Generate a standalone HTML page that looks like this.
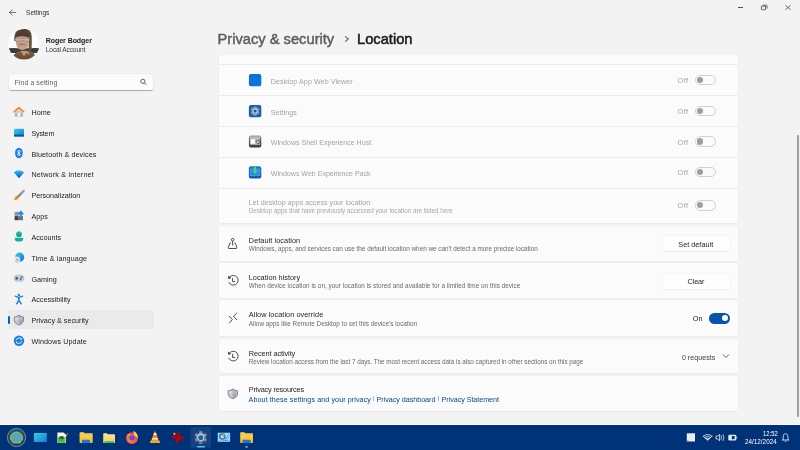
<!DOCTYPE html>
<html><head><meta charset="utf-8"><style>
html,body{margin:0;padding:0;width:800px;height:450px;overflow:hidden;background:#f3f3f3;}
body{position:relative;font-family:"Liberation Sans",sans-serif;}
.a{position:absolute;}
.t{position:absolute;white-space:nowrap;line-height:1;}
.card{position:absolute;left:219px;width:519px;background:#fbfbfb;border-radius:1.8px;box-shadow:0 0 0 0.5px #ececec, 0 0.6px 0 0 #e6e6e6;}
.btn{position:absolute;background:#fefefe;border-radius:2.5px;box-shadow:0 0 0 0.5px #efefef, 0 0.7px 0 0 #e0e0e0;}
.sep{color:#8a8a8a;padding:0 2px;font-size:6px;position:relative;top:-1px}
</style></head><body>
<div id="root" style="position:absolute;left:0;top:0;width:800px;height:450px;will-change:transform">
<svg class="a" style="left:7px;top:7px" width="11" height="11" viewBox="7 7 11 11"><path d="M15.8 12.45H9.6M12.2 9.8L9.5 12.45L12.2 15.1" fill="none" stroke="#4e4e4e" stroke-width="0.8" stroke-linecap="round" stroke-linejoin="round"/></svg>
<div class="t" style="left:26.10px;top:10.00px;font-size:6.6px;color:#303030;font-weight:400;letter-spacing:-0.091px;">Settings</div>
<div class="a" style="left:738px;top:7px;width:5.2px;height:0.8px;background:#505050"></div>
<svg class="a" style="left:760px;top:4px" width="9" height="7" viewBox="0 0 9 7"><rect x="1.4" y="2.2" width="4.2" height="3.6" rx="0.5" fill="none" stroke="#4a4a4a" stroke-width="0.85"/><path d="M2.6 1.2H6.4Q7 1.2 7 1.8V4.6" fill="none" stroke="#4a4a4a" stroke-width="0.85"/></svg>
<svg class="a" style="left:784px;top:4px" width="8" height="7" viewBox="0 0 8 7"><path d="M1.4 1.3l5.2 4.5M6.6 1.3L1.4 5.8" stroke="#4a4a4a" stroke-width="0.8"/></svg>
<svg class="a" style="left:8px;top:28px" width="32" height="32" viewBox="0 0 32 32">
<defs><clipPath id="av"><circle cx="16" cy="16" r="15.6"/></clipPath>
<linearGradient id="avj" x1="0" y1="0" x2="0" y2="1"><stop offset="0" stop-color="#8a6248"/><stop offset="1" stop-color="#5a3a28"/></linearGradient>
<linearGradient id="avh" x1="0" y1="0" x2="1" y2="0"><stop offset="0" stop-color="#62503e"/><stop offset="0.5" stop-color="#4a3a2e"/><stop offset="1" stop-color="#6a5846"/></linearGradient></defs>
<circle cx="16" cy="16" r="15.6" fill="#fcfcfc"/>
<g clip-path="url(#av)">
<path d="M-1 20.5 Q5 19.6 9 20.2 L23 20.2 Q27 19.6 33 20.5 L33 25 L-1 25Z" fill="#3a3c36"/>
<path d="M3 34 Q4 27 9 24 Q14 22.4 17 22.6 Q23 22.8 26 25.4 Q28.5 28 29 34Z" fill="url(#avj)"/>
<path d="M13 23 L16 28.5 L19 23.2Z" fill="#c09a84"/>
<path d="M17.5 23.4 L21.5 27 L20 23.4Z" fill="#d4bca4"/>
<path d="M6.2 13 Q5.8 5 9.5 2.6 Q13.5 0.6 17.5 1 Q22 1.4 23.2 5 Q24.2 9 23.8 14 Q24 20 22.8 24.5 L20.8 24.5 Q20.8 18 20.6 12Z" fill="url(#avh)"/>
<path d="M7.4 9.5 Q7.6 14 8.4 17.6 Q9.8 21.6 13.8 22 Q18 22 20.4 18.6 L21.4 10 Q15.6 6.8 7.4 9.5Z" fill="#c79e8c"/>
<path d="M6.6 10 Q12 6 21.8 8.6 L22 5.6 Q16.5 3 9.2 4.6Z" fill="#4e3e30"/>
<path d="M7.2 10.4 H21.2 V12.9 Q18 13.9 14.4 12.5 Q10.4 13.9 7.2 12.8Z" fill="#cbb0a0" stroke="#8e7868" stroke-width="0.45"/>
<path d="M11 16.6 Q14 15.8 17 16.6" stroke="#7e6050" stroke-width="0.85" fill="none"/>
</g></svg>
<div class="t" style="left:45.80px;top:37.00px;font-size:7.0px;color:#1b1b1b;font-weight:700;letter-spacing:-0.056px;">Roger Bodger</div>
<div class="t" style="left:45.80px;top:47.00px;font-size:6.6px;color:#3a3a3a;font-weight:400;letter-spacing:-0.128px;">Local Account</div>
<div class="a" style="left:9px;top:74px;width:144px;height:16.6px;background:#fbfbfb;border-radius:2px;box-shadow:0 0 0 0.5px #e6e6e6;border-bottom:0.7px solid #b0b0b0;box-sizing:border-box"></div>
<div class="t" style="left:14.50px;top:80.00px;font-size:7.1px;color:#666666;font-weight:400;letter-spacing:0.022px;">Find a setting</div>
<svg class="a" style="left:138px;top:77px" width="10" height="10" viewBox="138 77 10 10"><circle cx="142.9" cy="81.3" r="2.1" fill="none" stroke="#4a4a4a" stroke-width="0.85"/><path d="M144.5 82.9L146 84.4" stroke="#4a4a4a" stroke-width="0.9" stroke-linecap="round"/></svg>
<div class="a" style="left:8px;top:310.4px;width:146px;height:18.8px;background:#eaeaea;border-radius:3px"></div>
<div class="a" style="left:8.3px;top:316px;width:1.6px;height:8px;background:#005fb8;border-radius:1px"></div>
<div class="t" style="left:31.40px;top:109.00px;font-size:7.2px;color:#1b1b1b;font-weight:400;letter-spacing:0.078px;">Home</div>
<div class="t" style="left:31.40px;top:130.00px;font-size:7.2px;color:#1b1b1b;font-weight:400;letter-spacing:-0.195px;">System</div>
<div class="t" style="left:31.40px;top:151.00px;font-size:7.2px;color:#1b1b1b;font-weight:400;letter-spacing:0.077px;">Bluetooth &amp; devices</div>
<div class="t" style="left:31.40px;top:171.00px;font-size:7.2px;color:#1b1b1b;font-weight:400;letter-spacing:0.193px;">Network &amp; internet</div>
<div class="t" style="left:31.40px;top:192.00px;font-size:7.2px;color:#1b1b1b;font-weight:400;letter-spacing:-0.024px;">Personalization</div>
<div class="t" style="left:31.40px;top:213.00px;font-size:7.2px;color:#1b1b1b;font-weight:400;letter-spacing:0.002px;">Apps</div>
<div class="t" style="left:31.40px;top:234.00px;font-size:7.2px;color:#1b1b1b;font-weight:400;letter-spacing:0.028px;">Accounts</div>
<div class="t" style="left:31.40px;top:255.00px;font-size:7.2px;color:#1b1b1b;font-weight:400;letter-spacing:0.115px;">Time &amp; language</div>
<div class="t" style="left:31.40px;top:276.00px;font-size:7.2px;color:#1b1b1b;font-weight:400;letter-spacing:0.021px;">Gaming</div>
<div class="t" style="left:31.40px;top:296.00px;font-size:7.2px;color:#1b1b1b;font-weight:400;letter-spacing:0.011px;">Accessibility</div>
<div class="t" style="left:31.40px;top:317.00px;font-size:7.2px;color:#1b1b1b;font-weight:400;letter-spacing:0.010px;">Privacy &amp; security</div>
<div class="t" style="left:31.40px;top:338.00px;font-size:7.2px;color:#1b1b1b;font-weight:400;letter-spacing:0.083px;">Windows Update</div>
<svg class="a" style="left:0;top:100px" width="40" height="260" viewBox="0 100 40 260">
<defs>
<linearGradient id="gsys" x1="0" y1="0" x2="1" y2="1"><stop offset="0" stop-color="#36d0e6"/><stop offset="1" stop-color="#1478d4"/></linearGradient>
<linearGradient id="gwifi" x1="0" y1="0" x2="0" y2="1"><stop offset="0" stop-color="#3ac6f0"/><stop offset="0.5" stop-color="#1a86dc"/><stop offset="1" stop-color="#0a4fa8"/></linearGradient>
<linearGradient id="gwall" x1="0" y1="0" x2="0" y2="1"><stop offset="0" stop-color="#e4e4e4"/><stop offset="1" stop-color="#a8a8a8"/></linearGradient>
<linearGradient id="gacc" x1="0" y1="0" x2="0" y2="1"><stop offset="0" stop-color="#28c8b0"/><stop offset="1" stop-color="#109a88"/></linearGradient>
<linearGradient id="gtime" x1="0" y1="0" x2="1" y2="1"><stop offset="0" stop-color="#3ad0e8"/><stop offset="1" stop-color="#1070d0"/></linearGradient>
<linearGradient id="gshield" x1="0" y1="0" x2="1" y2="1"><stop offset="0" stop-color="#d8dde4"/><stop offset="1" stop-color="#8c929a"/></linearGradient>
<linearGradient id="gbrush" x1="0" y1="0" x2="1" y2="0"><stop offset="0" stop-color="#6e7680"/><stop offset="1" stop-color="#9aa2aa"/></linearGradient>
<linearGradient id="gclock" x1="0" y1="0" x2="1" y2="1"><stop offset="0" stop-color="#fafafa"/><stop offset="1" stop-color="#b8bcc2"/></linearGradient>
</defs>
<!-- home -->
<path d="M14.8 111.8V116.4H23V111.8L18.9 108.6Z" fill="url(#gwall)"/>
<rect x="17.4" y="112.6" width="3" height="3.8" fill="#f3f3f3"/>
<path d="M14 111.8L18.9 107.6L23.8 111.8" fill="none" stroke="#f07b1e" stroke-width="1.4" stroke-linejoin="round" stroke-linecap="round"/>
<!-- system -->
<rect x="14" y="128.8" width="10" height="7.6" rx="0.8" fill="url(#gsys)"/>
<rect x="14" y="134.6" width="10" height="1.8" rx="0.5" fill="#0e5a98"/>
<!-- bluetooth -->
<ellipse cx="18.9" cy="153" rx="3.9" ry="5.2" fill="#1a80ea"/>
<path d="M17.2 151.2L20.4 154.6L18.9 156V150L20.4 151.4L17.2 154.8" fill="none" stroke="#fff" stroke-width="0.75" stroke-linejoin="round"/>
<!-- network -->
<path d="M13.8 172.2Q19 168.4 24.2 172.2L19 178.2Z" fill="url(#gwifi)"/>
<!-- personalization -->
<path d="M23.8 190.8L17.6 197.2" stroke="url(#gbrush)" stroke-width="2.2" stroke-linecap="round"/>
<path d="M17.8 195.8Q19.6 197.6 17.8 199.2Q16 200.2 13.8 199.8Q15 198.6 15 197.4Q15.6 195.4 17.8 195.8Z" fill="#f58a1a"/>
<!-- apps -->
<rect x="14.6" y="211.8" width="4.1" height="4.1" fill="#8f959c"/>
<rect x="14.6" y="216.1" width="4.1" height="4.1" fill="#3c4046"/>
<rect x="18.9" y="216.1" width="4.1" height="4.1" fill="#6c7178"/>
<path d="M20.8 210.6L23.8 213.6L20.8 216.6L17.8 213.6Z" fill="#1a8cec"/>
<!-- accounts -->
<circle cx="19" cy="234.2" r="2.9" fill="url(#gacc)"/>
<path d="M14.8 237.8H23.2V239Q23.2 241.6 19 241.6Q14.8 241.6 14.8 239Z" fill="#18b09a"/>
<!-- time -->
<circle cx="19.6" cy="257.2" r="4.6" fill="url(#gtime)"/>
<circle cx="16.9" cy="260" r="3.2" fill="url(#gclock)" stroke="#f3f3f3" stroke-width="0.5"/>
<path d="M16.9 258.4V260.2H18.2" stroke="#6a7078" stroke-width="0.5" fill="none"/>
<!-- gaming -->
<rect x="14.1" y="274.9" width="9.8" height="6.6" rx="3.3" fill="#c6ccd4" stroke="#a4acb6" stroke-width="0.4"/>
<rect x="15.6" y="277" width="2.2" height="2.4" rx="0.5" fill="#4a4e56"/>
<circle cx="21.7" cy="277.3" r="1" fill="#2a7ed8"/>
<circle cx="20.6" cy="279.3" r="1" fill="#2a7ed8"/>
<!-- accessibility -->
<circle cx="18.9" cy="295" r="1.2" fill="#1a7ee0"/>
<path d="M15.2 296.2L18.9 297.6L22.6 296.2" fill="none" stroke="#1a7ee0" stroke-width="1.4" stroke-linecap="round" stroke-linejoin="round"/>
<path d="M18.9 297.4V300.4M18.9 300.4L16.6 303.8M18.9 300.4L21.2 303.8" fill="none" stroke="#1a7ee0" stroke-width="1.5" stroke-linecap="round" stroke-linejoin="round"/>
<!-- shield -->
<path d="M18.9 314.8Q21.5 316.6 24 316.7V320Q23.6 323.8 18.9 325.4Q14.2 323.8 13.8 320V316.7Q16.3 316.6 18.9 314.8Z" fill="#7e848c"/>
<path d="M18.9 315.9Q16.8 317.3 14.7 317.5V320Q15.1 323.1 18.9 324.4Z" fill="#d2d6dc"/>
<path d="M18.9 315.9Q21 317.3 23.1 317.5V320Q22.7 323.1 18.9 324.4Z" fill="#b4bac2"/>
<path d="M14.8 320.2H18.9V324.3Q15.4 322.9 14.8 320.2Z" fill="#c2c6cc"/>
<path d="M23 320.2H18.9V324.3Q22.4 322.9 23 320.2Z" fill="#a2a8b0"/>
<!-- update -->
<circle cx="19" cy="340.7" r="5.2" fill="#1a80e2"/>
<path d="M16.4 340.2A2.7 2.7 0 0 1 21.3 339" fill="none" stroke="#fff" stroke-width="0.8"/>
<path d="M21.6 341.2A2.7 2.7 0 0 1 16.7 342.4" fill="none" stroke="#fff" stroke-width="0.8"/>
<path d="M21.9 337.8V339.6H20.1Z" fill="#fff"/>
<path d="M16.1 343.6V341.8H17.9Z" fill="#fff"/>
</svg>

<div class="t" style="left:217.50px;top:32.00px;font-size:14.7px;color:#5c5c5c;font-weight:400;-webkit-text-stroke:0.45px #5c5c5c">Privacy &amp; security</div>
<svg class="a" style="left:343px;top:34px" width="8" height="10" viewBox="343 34 8 10"><path d="M345.4 36.7L348.3 39L345.4 41.3" fill="none" stroke="#5c5c5c" stroke-width="1.05" stroke-linecap="round" stroke-linejoin="round"/></svg>
<div class="t" style="left:357.00px;top:32.00px;font-size:14.7px;color:#1b1b1b;font-weight:400;-webkit-text-stroke:0.55px #1b1b1b">Location</div>
<div class="card" style="top:55px;height:168px;border-top-left-radius:0;border-top-right-radius:0"></div>
<div class="a" style="left:217px;top:53px;width:523px;height:2px;background:#f3f3f3"></div>
<div class="a" style="left:219px;top:64.1px;width:519px;height:1px;background:#ececec"></div>
<div class="a" style="left:219px;top:94.9px;width:519px;height:1px;background:#ececec"></div>
<div class="a" style="left:219px;top:125.9px;width:519px;height:1px;background:#ececec"></div>
<div class="a" style="left:219px;top:156.9px;width:519px;height:1px;background:#ececec"></div>
<div class="a" style="left:219px;top:187.9px;width:519px;height:1px;background:#ececec"></div>
<div class="t" style="left:270.80px;top:79.00px;font-size:7.1px;color:#a3a3a3;font-weight:400;letter-spacing:0.082px;">Desktop App Web Viewer</div>
<div class="t" style="left:270.80px;top:110.00px;font-size:7.1px;color:#a3a3a3;font-weight:400;letter-spacing:0.045px;">Settings</div>
<div class="t" style="left:270.80px;top:140.00px;font-size:7.1px;color:#a3a3a3;font-weight:400;letter-spacing:-0.005px;">Windows Shell Experience Host</div>
<div class="t" style="left:270.80px;top:171.00px;font-size:7.1px;color:#a3a3a3;font-weight:400;letter-spacing:-0.023px;">Windows Web Experience Pack</div>
<div class="t" style="left:677.60px;top:77.00px;font-size:7.3px;color:#a3a3a3;font-weight:400;letter-spacing:0.364px;">Off</div>
<div class="a" style="left:694.5px;top:74.8px;width:21px;height:10.4px;border:0.7px solid #cfcfcf;border-radius:6px;box-sizing:border-box"></div>
<div class="a" style="left:696.5px;top:76.8px;width:6.2px;height:6.2px;background:#9e9e9e;border-radius:50%"></div>
<div class="t" style="left:677.60px;top:108.00px;font-size:7.3px;color:#a3a3a3;font-weight:400;letter-spacing:0.364px;">Off</div>
<div class="a" style="left:694.5px;top:105.8px;width:21px;height:10.4px;border:0.7px solid #cfcfcf;border-radius:6px;box-sizing:border-box"></div>
<div class="a" style="left:696.5px;top:107.8px;width:6.2px;height:6.2px;background:#9e9e9e;border-radius:50%"></div>
<div class="t" style="left:677.60px;top:139.00px;font-size:7.3px;color:#a3a3a3;font-weight:400;letter-spacing:0.364px;">Off</div>
<div class="a" style="left:694.5px;top:136.4px;width:21px;height:10.4px;border:0.7px solid #cfcfcf;border-radius:6px;box-sizing:border-box"></div>
<div class="a" style="left:696.5px;top:138.4px;width:6.2px;height:6.2px;background:#9e9e9e;border-radius:50%"></div>
<div class="t" style="left:677.60px;top:169.00px;font-size:7.3px;color:#a3a3a3;font-weight:400;letter-spacing:0.364px;">Off</div>
<div class="a" style="left:694.5px;top:167.1px;width:21px;height:10.4px;border:0.7px solid #cfcfcf;border-radius:6px;box-sizing:border-box"></div>
<div class="a" style="left:696.5px;top:169.1px;width:6.2px;height:6.2px;background:#9e9e9e;border-radius:50%"></div>
<div class="t" style="left:677.60px;top:202.00px;font-size:7.3px;color:#a3a3a3;font-weight:400;letter-spacing:0.364px;">Off</div>
<div class="a" style="left:694.5px;top:200.3px;width:21px;height:10.4px;border:0.7px solid #cfcfcf;border-radius:6px;box-sizing:border-box"></div>
<div class="a" style="left:696.5px;top:202.3px;width:6.2px;height:6.2px;background:#9e9e9e;border-radius:50%"></div>
<div class="t" style="left:248.80px;top:200.00px;font-size:7.1px;color:#a3a3a3;font-weight:400;letter-spacing:0.030px;">Let desktop apps access your location</div>
<div class="t" style="left:248.80px;top:208.00px;font-size:6.33px;color:#a8a8a8;font-weight:400;letter-spacing:-0.009px;">Desktop apps that have previously accessed your location are listed here</div>
<div class="card" style="top:226px;height:34.5px;"></div>
<div class="t" style="left:248.80px;top:237.00px;font-size:7.3px;color:#262626;font-weight:400;letter-spacing:0.068px;">Default location</div>
<div class="t" style="left:248.80px;top:246.00px;font-size:6.33px;color:#6a6a6a;font-weight:400;letter-spacing:0.004px;">Windows, apps, and services can use the default location when we can't detect a more precise location</div>
<div class="btn" style="left:662.7px;top:235.9px;width:67px;height:15.2px"></div>
<div class="t" style="left:678.30px;top:241.00px;font-size:7.2px;color:#1b1b1b;font-weight:400;letter-spacing:0.048px;">Set default</div>
<div class="card" style="top:263px;height:35px;"></div>
<div class="t" style="left:248.80px;top:274.00px;font-size:7.3px;color:#262626;font-weight:400;letter-spacing:0.018px;">Location history</div>
<div class="t" style="left:248.80px;top:283.00px;font-size:6.33px;color:#6a6a6a;font-weight:400;letter-spacing:0.034px;">When device location is on, your location is stored and available for a limited time on this device</div>
<div class="btn" style="left:662.7px;top:273.5px;width:67px;height:15.2px"></div>
<div class="t" style="left:687.60px;top:278.00px;font-size:7.2px;color:#1b1b1b;font-weight:400;letter-spacing:-0.117px;">Clear</div>
<div class="card" style="top:300px;height:35.6px;"></div>
<div class="t" style="left:248.80px;top:311.00px;font-size:7.3px;color:#262626;font-weight:400;letter-spacing:0.065px;">Allow location override</div>
<div class="t" style="left:248.80px;top:321.00px;font-size:6.33px;color:#6a6a6a;font-weight:400;letter-spacing:0.012px;">Allow apps like Remote Desktop to set this device's location</div>
<div class="t" style="left:692.80px;top:315.00px;font-size:7.2px;color:#1b1b1b;font-weight:400;letter-spacing:0.003px;">On</div>
<div class="a" style="left:709px;top:313.2px;width:21.2px;height:10.4px;background:#0853ab;border-radius:6px"></div>
<div class="a" style="left:721.6px;top:315.3px;width:6.2px;height:6.2px;background:#fff;border-radius:50%"></div>
<div class="card" style="top:339px;height:34px;"></div>
<div class="t" style="left:248.80px;top:350.00px;font-size:7.3px;color:#262626;font-weight:400;letter-spacing:-0.070px;">Recent activity</div>
<div class="t" style="left:248.80px;top:359.00px;font-size:6.33px;color:#6a6a6a;font-weight:400;letter-spacing:-0.026px;">Review location access from the last 7 days. The most recent access data is also captured in other sections on this page</div>
<div class="t" style="left:681.90px;top:355.00px;font-size:7.1px;color:#404040;font-weight:400;letter-spacing:0.027px;">0 requests</div>
<svg class="a" style="left:722px;top:353px" width="8" height="6" viewBox="0 0 8 6"><path d="M1 1.5L4 4.5L7 1.5" fill="none" stroke="#505050" stroke-width="0.9"/></svg>
<div class="card" style="top:376px;height:34.7px;"></div>
<div class="t" style="left:248.80px;top:386.00px;font-size:7.3px;color:#262626;font-weight:400;letter-spacing:-0.171px;">Privacy resources</div>
<div class="t" style="left:248.60px;top:396.00px;font-size:7.2px;color:#0c4696;font-weight:400;letter-spacing:0.068px;">About these settings and your privacy</div>
<div class="t" style="left:376.50px;top:396.00px;font-size:7.2px;color:#0c4696;font-weight:400;letter-spacing:-0.037px;">Privacy dashboard</div>
<div class="t" style="left:441.60px;top:396.00px;font-size:7.2px;color:#0c4696;font-weight:400;letter-spacing:-0.060px;">Privacy Statement</div>
<div class="a" style="left:373px;top:396px;width:0.7px;height:5.2px;background:#b4b4b4"></div><div class="a" style="left:438.3px;top:396px;width:0.7px;height:5.2px;background:#b4b4b4"></div>
<svg class="a" style="left:220px;top:50px" width="50" height="360" viewBox="220 50 50 360">
<defs>
<linearGradient id="gshell" x1="0" y1="0" x2="0" y2="1"><stop offset="0" stop-color="#9a9a9a"/><stop offset="0.5" stop-color="#5a5a5a"/><stop offset="1" stop-color="#3a3a3a"/></linearGradient>
<linearGradient id="gweb" x1="0" y1="0" x2="0" y2="1"><stop offset="0" stop-color="#1a7ad8"/><stop offset="1" stop-color="#0a58b0"/></linearGradient>
<linearGradient id="gshield2" x1="0" y1="0" x2="1" y2="1"><stop offset="0" stop-color="#d4d9e0"/><stop offset="1" stop-color="#868c94"/></linearGradient>
</defs>
<!-- descender remnants -->
<g fill="#c0c0c0"><rect x="293.2" y="54.2" width="0.6" height="1.6"/><rect x="297.2" y="54.2" width="0.6" height="1.6"/><path d="M336.2 55.8L337.6 54.2" stroke="#c0c0c0" stroke-width="0.5"/><rect x="351.2" y="54.2" width="0.6" height="1.6"/></g>
<!-- desktop app web viewer -->
<rect x="248.9" y="73.9" width="12.4" height="12.4" rx="2" fill="#0a74d8"/>
<!-- settings -->
<rect x="248.9" y="104.9" width="12.4" height="12.4" rx="2" fill="#0b62bc"/>
<g transform="translate(255.1 111.1)">
<path d="M-1.3 -4.6H1.3L1.8 -3.3L3.2 -3.6L4.5 -1.4L3.6 -0.3V0.3L4.5 1.4L3.2 3.6L1.8 3.3L1.3 4.6H-1.3L-1.8 3.3L-3.2 3.6L-4.5 1.4L-3.6 0.3V-0.3L-4.5 -1.4L-3.2 -3.6L-1.8 -3.3Z" fill="#8e949c"/>
<circle r="2.5" fill="#dde2e8"/><circle r="1.7" fill="#0b5cb4"/>
</g>
<!-- shell experience host -->
<rect x="248.9" y="135.6" width="12.4" height="12" rx="2" fill="url(#gshell)"/>
<rect x="249.8" y="136.4" width="10.6" height="1.6" fill="#b8b8b8"/>
<rect x="250.2" y="138.4" width="9.8" height="6.2" fill="#e0e0e0"/>
<rect x="250.8" y="139.4" width="4" height="4.2" fill="#fafafa"/>
<path d="M256.2 139.4V143.4M257.2 141L259.2 139.6V143.4H257.2" stroke="#303030" stroke-width="0.8" fill="none"/>
<!-- web experience pack -->
<rect x="248.9" y="166.2" width="12.4" height="12.4" rx="2" fill="url(#gweb)"/>
<rect x="250.4" y="169" width="9.4" height="6.8" fill="#2a8ae8" stroke="#6ab0f0" stroke-width="0.5"/>
<path d="M255.1 167.6V171.8" stroke="#50d850" stroke-width="2.2" stroke-linecap="round"/>
<path d="M252.3 170.8L255.1 174L257.9 170.8Z" fill="#50d850"/>
<!-- default location -->
<g fill="none" stroke="#303030" stroke-width="0.85" stroke-linejoin="round">
<circle cx="232.6" cy="239.7" r="1.3"/>
<path d="M232.6 241V245.6"/>
<path d="M230.9 243.1H229.9L228.3 247.6Q228.1 248.5 229 248.5H236.2Q237.1 248.5 236.9 247.6L235.3 243.1H234.3"/>
</g>
<!-- location history -->
<g fill="none" stroke="#303030" stroke-width="0.85" stroke-linecap="round" stroke-linejoin="round">
<path d="M228.8 282.4A4.9 4.9 0 1 0 229.8 276.8"/>
<path d="M232.6 278.4V281.6H234.8"/>
</g>
<path d="M228.1 275.6L231.2 278.3L228.3 278.9Z" fill="#303030"/>
<!-- override -->
<g fill="none" stroke="#303030" stroke-width="0.85" stroke-linecap="round" stroke-linejoin="round">
<path d="M229.2 316.4L232.4 319.4L229.4 323"/>
<path d="M236.6 313.2L233.4 316.4L236.6 319.6"/>
</g>
<!-- recent activity -->
<g fill="none" stroke="#303030" stroke-width="0.85" stroke-linecap="round" stroke-linejoin="round">
<path d="M228.8 358.2A4.9 4.9 0 1 0 229.8 352.6"/>
<path d="M232.6 354.2V357.4H234.8"/>
</g>
<path d="M228.1 351.4L231.2 354.1L228.3 354.7Z" fill="#303030"/>
<!-- privacy shield -->
<path d="M232.8 388.6Q235.4 390.4 238 390.5V393.8Q237.6 397.6 232.8 399.3Q228 397.6 227.6 393.8V390.5Q230.2 390.4 232.8 388.6Z" fill="#7e848c"/>
<path d="M232.8 389.7Q230.6 391.1 228.5 391.3V393.8Q228.9 396.9 232.8 398.3Z" fill="#d2d6dc"/>
<path d="M232.8 389.7Q235 391.1 237.1 391.3V393.8Q236.7 396.9 232.8 398.3Z" fill="#b4bac2"/>
<path d="M228.6 394H232.8V398.2Q229.2 396.8 228.6 394Z" fill="#c2c6cc"/>
<path d="M237 394H232.8V398.2Q236.4 396.8 237 394Z" fill="#a2a8b0"/>
</svg>

<div class="a" style="left:797px;top:135px;width:2px;height:282px;background:#a0a0a0;border-radius:1px"></div>
<div class="a" style="left:0;top:424px;width:800px;height:1px;background:#fbfbfb"></div>
<div class="a" style="left:0;top:425px;width:800px;height:25px;background:#003278"></div>
<svg class="a" style="left:0;top:425px" width="800" height="25" viewBox="0 425 800 25">
<defs>
<radialGradient id="gshellbg" cx="0.5" cy="0.45" r="0.55"><stop offset="0" stop-color="#3e8090"/><stop offset="1" stop-color="#163a4c"/></radialGradient>
<linearGradient id="gdesk" x1="0" y1="0" x2="1" y2="1"><stop offset="0" stop-color="#34cce8"/><stop offset="1" stop-color="#1480d8"/></linearGradient>
<linearGradient id="gfold" x1="0" y1="0" x2="0" y2="1"><stop offset="0" stop-color="#ffd860"/><stop offset="1" stop-color="#f4b820"/></linearGradient>
<linearGradient id="gfold2" x1="0" y1="0" x2="0" y2="1"><stop offset="0" stop-color="#ffe49a"/><stop offset="1" stop-color="#f8cc58"/></linearGradient>
<radialGradient id="gff" cx="0.4" cy="0.6" r="0.6"><stop offset="0" stop-color="#ff9a20"/><stop offset="1" stop-color="#ff3a4a"/></radialGradient>
<linearGradient id="ggear" x1="0" y1="0" x2="0" y2="1"><stop offset="0" stop-color="#9aa0a8"/><stop offset="1" stop-color="#70767e"/></linearGradient>
</defs>
<!-- start shell -->
<circle cx="16.5" cy="437.5" r="9.1" fill="url(#gshellbg)" stroke="#9ab4c4" stroke-width="0.7"/>
<path d="M12.8 442.8L12.4 441.4L11 440.2Q10.2 438.4 10.8 436.4Q10.6 435 11.8 434.4Q12.2 433.2 13.4 433.2Q14.2 432.1 15.4 432.4Q16.5 431.6 17.6 432.4Q18.8 432.1 19.6 433.2Q20.8 433.2 21.2 434.4Q22.4 435 22.2 436.4Q22.8 438.4 22 440.2L20.6 441.4L20.2 442.8Z" fill="#52a8b8" stroke="#e6c040" stroke-width="0.8" stroke-linejoin="round"/>
<!-- desktop blue -->
<rect x="34" y="433" width="12.8" height="9" fill="url(#gdesk)"/>
<!-- notepad-ish -->
<path d="M57.4 432.4H63.6L66 434.8V443H57.4Z" fill="#f4f4f0"/>
<rect x="58" y="437.4" width="7.4" height="5.4" fill="#4ab830"/>
<ellipse cx="61.6" cy="437.6" rx="2.6" ry="1.6" fill="#2a6a2a"/>
<path d="M64 441L67.6 433" stroke="#d8a838" stroke-width="0.8"/>
<!-- explorer folder -->
<path d="M79.6 433.2Q79.6 432.3 80.5 432.3H83.6L84.6 433.3H91.8Q92.7 433.3 92.7 434.2V442.2Q92.7 443 91.8 443H80.5Q79.6 443 79.6 442.2Z" fill="url(#gfold)"/>
<path d="M79.6 434.4H92.7" stroke="#e8a818" stroke-width="0.5"/>
<rect x="82" y="439.8" width="8" height="3.2" rx="0.5" fill="#1a78d0"/>
<!-- folder green -->
<path d="M103.2 434.2Q103.2 433.3 104 433.3H106.8L107.8 434.2H114.2Q115 434.2 115 435V442.4Q115 443 114.2 443H104Q103.2 443 103.2 442.4Z" fill="url(#gfold2)"/>
<rect x="104.4" y="441.2" width="9.4" height="1.8" fill="#38c048"/>
<!-- firefox -->
<circle cx="132" cy="438.2" r="5.9" fill="url(#gff)"/>
<path d="M133.4 430.8Q138.4 433.4 137.8 438.8Q136.6 436 134 435.4Z" fill="#ffd236"/>
<path d="M126.4 436.8Q127 433.8 129.2 433.4Q130.2 434.4 130.4 435.6Z" fill="#ff9a2a"/>
<circle cx="132.1" cy="437.8" r="2.8" fill="#6a4ad8"/>
<path d="M130 436.2Q131.6 434.4 134 435" stroke="#c050d0" stroke-width="0.9" fill="none"/>
<!-- vlc -->
<path d="M154.4 431.6H155.6L159 441.2H151Z" fill="#f28a0c"/>
<path d="M153.9 433.3H156.1L156.7 435.1H153.3Z" fill="#f4f4f4"/>
<path d="M152.5 437.9H157.5L158.1 439.6H151.9Z" fill="#f4f4f4"/>
<path d="M150.6 440.4H159.4L160.2 443H149.8Z" fill="#f8a818"/>
<!-- red splatter -->
<g fill="#b20404" stroke="#b20404" stroke-linecap="round">
<circle cx="177.8" cy="438" r="3" stroke="none"/>
<path d="M177.8 437.4L179.2 432.4" stroke-width="1.8"/>
<path d="M177 437.6L172.4 437.2" stroke-width="2"/>
<path d="M178 437.6L183 437.8" stroke-width="2"/>
<path d="M177.6 438L177.2 442.6" stroke-width="1.9"/>
<circle cx="182.7" cy="441.2" r="0.9" stroke="none"/>
<circle cx="174.6" cy="434.4" r="1.7" stroke="none"/>
</g>
<circle cx="174.4" cy="433.8" r="1" fill="#e8c0c0"/>
<!-- settings active -->
<rect x="190.4" y="427.1" width="20.8" height="20.7" rx="2.2" fill="#ffffff" fill-opacity="0.08"/>
<g transform="translate(200.8 437.5)">
<path d="M-2.20 -3.81 L-1.11 -4.46 L-1.16 -5.99 L1.16 -5.99 L1.11 -4.46 L2.20 -3.81 L3.31 -3.20 L4.60 -4.00 L5.77 -1.99 L4.42 -1.27 L4.40 0.00 L4.42 1.27 L5.77 1.99 L4.60 4.00 L3.31 3.20 L2.20 3.81 L1.11 4.46 L1.16 5.99 L-1.16 5.99 L-1.11 4.46 L-2.20 3.81 L-3.31 3.20 L-4.60 4.00 L-5.77 1.99 L-4.42 1.27 L-4.40 0.00 L-4.42 -1.27 L-5.77 -1.99 L-4.60 -4.00 L-3.31 -3.20Z" fill="url(#ggear)" stroke="#8a9098" stroke-width="0.8" stroke-linejoin="round"/>
<circle r="3.3" fill="#eef2f6"/><circle r="2.6" fill="#1060c0"/>
</g>
<rect x="196.8" y="446" width="8.2" height="1.6" rx="0.8" fill="#4cc2ff"/>
<!-- control panel -->
<rect x="217.9" y="432.9" width="12.1" height="8.9" fill="#a8e0fa" stroke="#58b4ec" stroke-width="0.4"/>
<circle cx="222.3" cy="436.6" r="2.6" fill="none" stroke="#1a6ed0" stroke-width="1.3"/>
<path d="M222.3 436.6V433.6A3 3 0 0 1 225.2 436Z" fill="#f08a18"/>
<path d="M225.4 440L228.8 434.2M227 439.2L228.8 437.4" stroke="#1a6ed0" stroke-width="0.6"/>
<rect x="219" y="440.2" width="3.6" height="0.8" fill="#f09020"/>
<rect x="223" y="440.2" width="5.8" height="0.8" fill="#4a9ae0"/>
<!-- folder 2 -->
<path d="M240.2 433.2Q240.2 432.3 241.1 432.3H244.2L245.2 433.3H252.1Q253 433.3 253 434.2V442.2Q253 443 252.1 443H241.1Q240.2 443 240.2 442.2Z" fill="url(#gfold)"/>
<path d="M240.2 434.4H253" stroke="#e8a818" stroke-width="0.5"/>
<rect x="242.6" y="439.8" width="8" height="3.2" rx="0.5" fill="#1a78d0"/>
<rect x="245" y="446.3" width="3" height="1.1" rx="0.5" fill="#a8b0c0"/>
<!-- tray -->
<rect x="686.8" y="433.3" width="8.2" height="8.2" fill="#ececec"/>
<path d="M686.8 440.4H688.6V441.5H686.8Z" fill="#48b848"/>
<g fill="none" stroke="#ffffff" stroke-width="0.75" stroke-linecap="round">
<path d="M703.2 436.2Q707.6 432.6 712 436.2"/>
<path d="M704.6 437.4Q707.6 435 710.6 437.4"/>
<path d="M706 438.6Q707.6 437.4 709.2 438.6"/>
<path d="M703.2 436.2L707.6 440.2L712 436.2"/>
</g>
<circle cx="707.6" cy="439.6" r="0.6" fill="#ffffff"/>
<path d="M716 436.2H717.6L719.6 434.4V440.8L717.6 439H716Z" fill="none" stroke="#ffffff" stroke-width="0.75" stroke-linejoin="round"/>
<path d="M721.2 435.8Q722.2 437.6 721.2 439.4M723.2 434.6Q724.8 437.6 723.2 440.6" fill="none" stroke="#ffffff" stroke-width="0.7" stroke-linecap="round"/>
<rect x="728.3" y="434.8" width="8" height="5.6" rx="1.2" fill="#e8ecf4"/>
<rect x="731.8" y="436" width="2.8" height="3.2" fill="#003278"/>
<path d="M736.4 436.6L737.4 437.6L736.4 438.6Z" fill="#ffffff"/>
<path d="M783.2 440V437Q783.2 433.6 785.6 433.6Q788 433.6 788 437V440H789L782.2 440Z M784.6 441.2H786.6" fill="none" stroke="#ffffff" stroke-width="0.7" stroke-linejoin="round"/>
</svg>

<div class="t" style="left:762.70px;top:430.00px;font-size:7.0px;color:#ffffff;font-weight:400;transform:scaleX(0.84);transform-origin:0 0">12:52</div>
<div class="t" style="left:745.30px;top:438.00px;font-size:7.0px;color:#ffffff;font-weight:400;transform:scaleX(0.905);transform-origin:0 0">24/12/2024</div>
</div>
</body></html>
